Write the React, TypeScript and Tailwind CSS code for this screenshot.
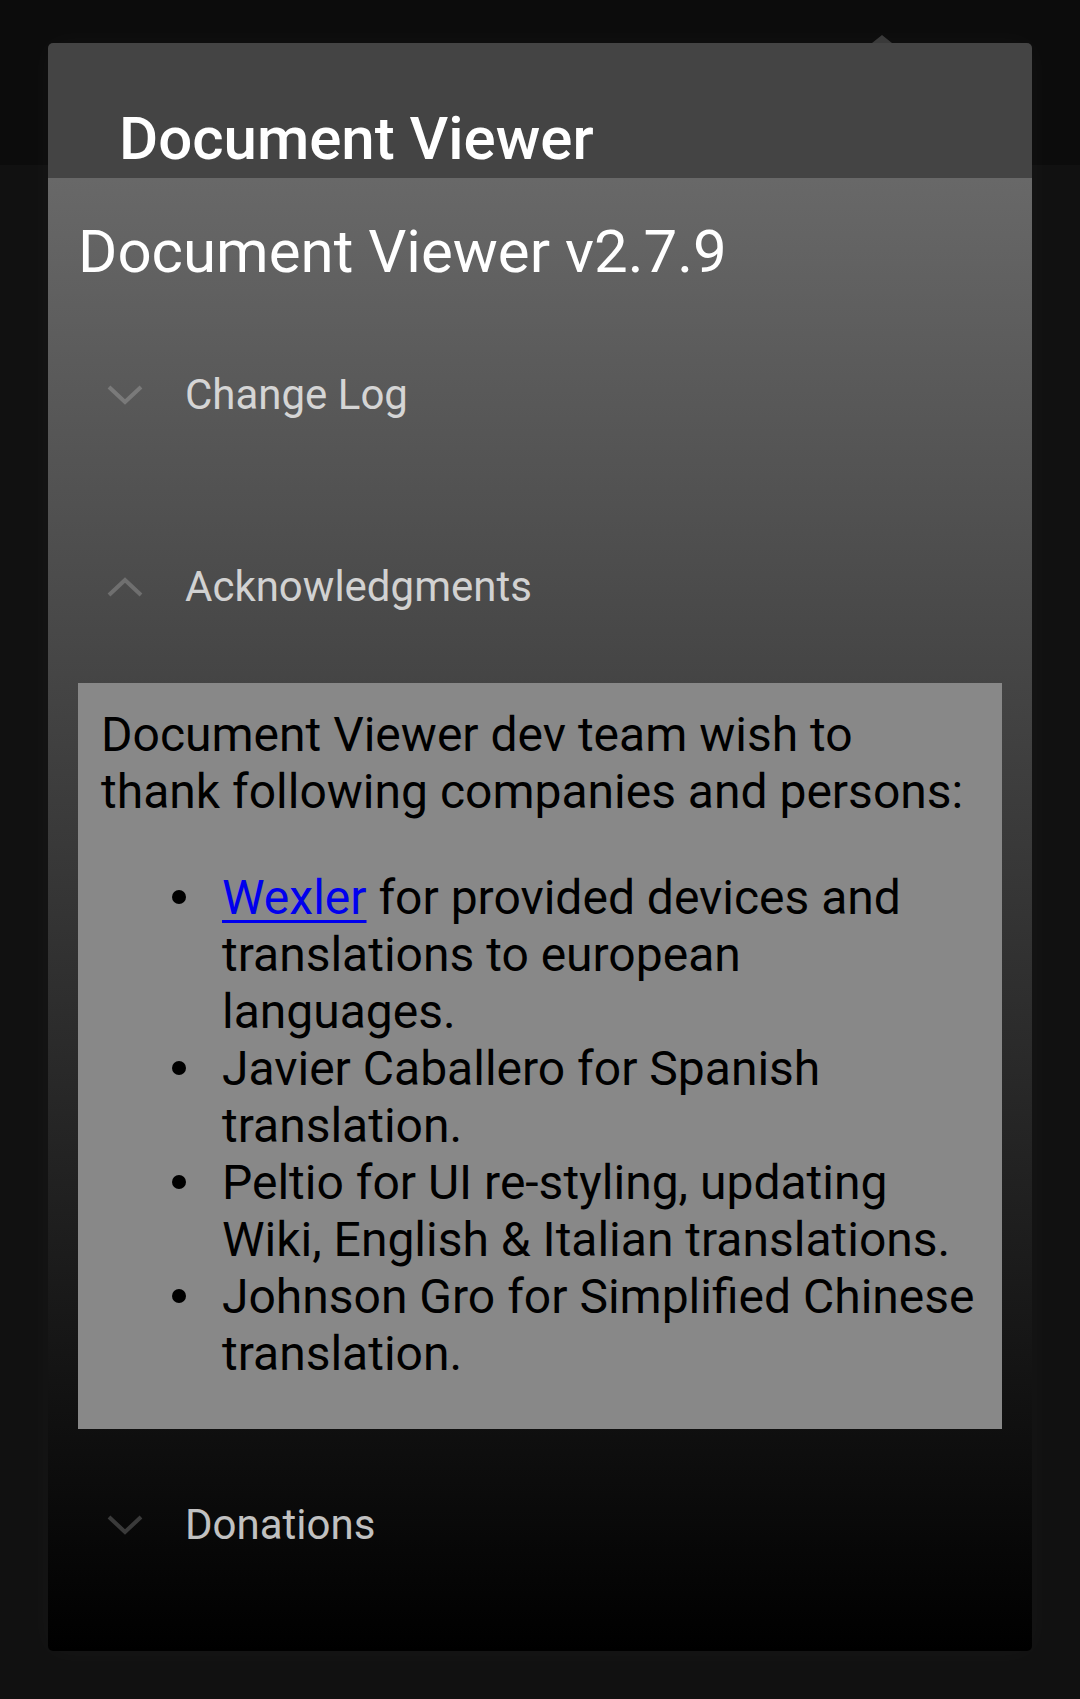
import React from "react";

function Chevron({ up = false, className = "" }: { up?: boolean; className?: string }) {
  return (
    <svg width="36" height="20" viewBox="0 0 36 20" className={className} fill="none">
      <polyline
        points={up ? "2,18 18,3 34,18" : "2,2 18,17 34,2"}
        stroke="currentColor"
        strokeWidth="4"
      />
    </svg>
  );
}

function Section({ label, up = false }: { label: string; up?: boolean }) {
  return (
    <div className="flex h-[192px] items-center">
      <div className="flex w-[107px] flex-none pl-[29px]">
        <Chevron up={up} className="text-white/20" />
      </div>
      <span className="text-[42px] leading-none text-white/75">{label}</span>
    </div>
  );
}

function Bullet({ children }: { children: React.ReactNode }) {
  return (
    <li className="flex items-start">
      <div className="flex w-[121px] flex-none justify-end pr-[36px] pt-[21px]">
        <div className="h-[14px] w-[14px] rounded-full bg-black" />
      </div>
      <div className="whitespace-nowrap">{children}</div>
    </li>
  );
}

export default function App() {
  return (
    <div
      className="relative min-h-[1699px] w-[1080px] bg-[linear-gradient(to_bottom,#0c0c0c_0px,#0c0c0c_165px,#111111_165px)] px-[48px] pt-[43px]"
      style={{ fontFamily: "Roboto, 'Noto Sans', sans-serif" }}
    >
      {/* little anchor arrow of the popup */}
      <div className="absolute left-[872px] top-[35px] h-0 w-0 border-x-[10px] border-b-[8px] border-x-transparent border-b-[#3a3a3a]" />

      <div className="flex w-[984px] flex-col overflow-hidden rounded-[5px] shadow-[0_0_30px_rgba(255,255,255,0.03)]">
        {/* Header */}
        <div className="h-[135px] bg-[#444444] pl-[71px] pt-[66px]">
          <h1 className="text-[60px] font-medium leading-none text-white">Document Viewer</h1>
        </div>

        {/* Body */}
        <div className="flex h-[1473px] flex-col bg-[linear-gradient(to_bottom,#686868,#000000)] px-[30px]">
          <div className="h-[121px] pt-[44px]">
            <h2 className="text-[60px] leading-none text-white">Document Viewer v2.7.9</h2>
          </div>

          <Section label="Change Log" />
          <Section label="Acknowledgments" up />

          <div className="bg-[#888888] pb-[47px] pl-[23px] pr-[4px] pt-[23px] text-[48px] leading-[57px] text-black">
            <p>
              Document Viewer dev team wish to
              <br />
              thank following companies and persons:
            </p>
            <ul className="mt-[49px]">
              <Bullet>
                <a href="#" className="text-[#0000ee] underline decoration-[3px] underline-offset-[6px]">
                  Wexler
                </a>{" "}
                for provided devices and
                <br />
                translations to european
                <br />
                languages.
              </Bullet>
              <Bullet>
                Javier Caballero for Spanish
                <br />
                translation.
              </Bullet>
              <Bullet>
                Peltio for UI re-styling, updating
                <br />
                Wiki, English &amp; Italian translations.
              </Bullet>
              <Bullet>
                Johnson Gro for Simplified Chinese
                <br />
                translation.
              </Bullet>
            </ul>
          </div>

          <Section label="Donations" />
        </div>
      </div>
    </div>
  );
}
